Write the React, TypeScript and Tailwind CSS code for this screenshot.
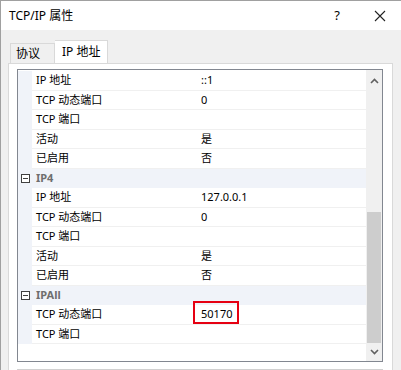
import React from 'react';

type Row =
  | { kind: 'group'; label: string }
  | { kind: 'prop'; name: string; value: string; mark?: boolean };

const rows: Row[] = [
  { kind: 'prop', name: 'IP 地址', value: '::1' },
  { kind: 'prop', name: 'TCP 动态端口', value: '0' },
  { kind: 'prop', name: 'TCP 端口', value: '' },
  { kind: 'prop', name: '活动', value: '是' },
  { kind: 'prop', name: '已启用', value: '否' },
  { kind: 'group', label: 'IP4' },
  { kind: 'prop', name: 'IP 地址', value: '127.0.0.1' },
  { kind: 'prop', name: 'TCP 动态端口', value: '0' },
  { kind: 'prop', name: 'TCP 端口', value: '' },
  { kind: 'prop', name: '活动', value: '是' },
  { kind: 'prop', name: '已启用', value: '否' },
  { kind: 'group', label: 'IPAll' },
  { kind: 'prop', name: 'TCP 动态端口', value: '50170', mark: true },
  { kind: 'prop', name: 'TCP 端口', value: '' },
];

function MinusBox() {
  return (
    <svg width="9" height="9" viewBox="0 0 9 9" className="shrink-0">
      <rect x="0.5" y="0.5" width="8" height="8" fill="#fff" stroke="#404040" />
      <line x1="2" y1="4.5" x2="7" y2="4.5" stroke="#404040" />
    </svg>
  );
}

function Chevron({ up }: { up?: boolean }) {
  return (
    <svg width="9" height="6" viewBox="0 0 9 6">
      <path
        d={up ? 'M1 5 L4.5 1.5 L8 5' : 'M1 1 L4.5 4.5 L8 1'}
        fill="none"
        stroke="#606060"
        strokeWidth="1.6"
      />
    </svg>
  );
}

export default function App() {
  return (
    <div
      className="w-[401px] h-[370px] overflow-hidden bg-[#f0f0f0] border-l border-t border-[#a0a0a0] text-black"
      style={{ fontFamily: '"Noto Sans", "Noto Sans CJK SC", sans-serif' }}
    >
      {/* title bar */}
      <div className="h-[29px] bg-white flex items-center pl-[8px] text-[12px]">
        <span>TCP/IP 属性</span>
        <span className="ml-auto mr-[34px] text-[13px]">?</span>
        <svg width="12" height="12" viewBox="0 0 12 12" className="mr-[15px]">
          <path d="M1 1 L11 11 M11 1 L1 11" stroke="#222" strokeWidth="1.1" />
        </svg>
      </div>

      {/* tabs */}
      <div className="h-[33px] flex items-end pl-[9px] text-[12px]">
        <div className="w-[45px] h-[20px] border border-b-0 border-[#d9d9d9] bg-[#f0f0f0] flex items-center pl-[5px]">
          协议
        </div>
        <div className="w-[53px] h-[23px] border border-b-0 border-l-0 border-[#d9d9d9] bg-white flex items-center pl-[7px] pb-[1px]">
          IP 地址
        </div>
      </div>

      {/* tab page */}
      <div className="ml-[7px] w-[385px] h-[320px] bg-white border border-[#d9d9d9] pt-[5px] pl-[8px]">
        <div className="w-[366px] h-[293px] border border-[#828790] flex">
          <div className="flex-1 pt-[1px] text-[11px]">
            {rows.map((r, i) =>
              r.kind === 'group' ? (
                <div key={i} className="h-[19.5px] bg-[#f0f3f9] flex items-center">
                  <div className="w-[14px] flex justify-center">
                    <MinusBox />
                  </div>
                  <span className="pl-[4px] font-bold text-[#6e6e6e]">{r.label}</span>
                </div>
              ) : (
                <div key={i} className="h-[19.5px] flex">
                  <div className="w-[14px] bg-[#f0f3f9]" />
                  <div className="w-[166px] border-b border-[#f0f0f0] flex items-center pl-[4px]">
                    {r.name}
                  </div>
                  <div className="flex-1 border-b border-[#f0f0f0] flex items-center pl-[3px] relative">
                    {r.value}
                    {r.mark && (
                      <div className="absolute left-[-5px] top-[-4px] w-[46px] h-[23px] border-2 border-[#e60012]" />
                    )}
                  </div>
                </div>
              )
            )}
          </div>
          {/* scrollbar */}
          <div className="w-[16px] bg-[#f0f0f0] flex flex-col items-center">
            <div className="h-[17px] flex items-center pt-[4px]">
              <Chevron up />
            </div>
            <div className="flex-1 w-full flex flex-col pt-[125px] pb-[1px]">
              <div className="flex-1 mx-[1px] bg-[#cdcdcd]" />
            </div>
            <div className="h-[17px] flex items-center pb-[2px]">
              <Chevron />
            </div>
          </div>
        </div>
        <div className="mt-[7px] w-[366px] h-[20px] border border-[#d0d0d0] bg-[#f7f7f7]" />
      </div>
    </div>
  );
}
